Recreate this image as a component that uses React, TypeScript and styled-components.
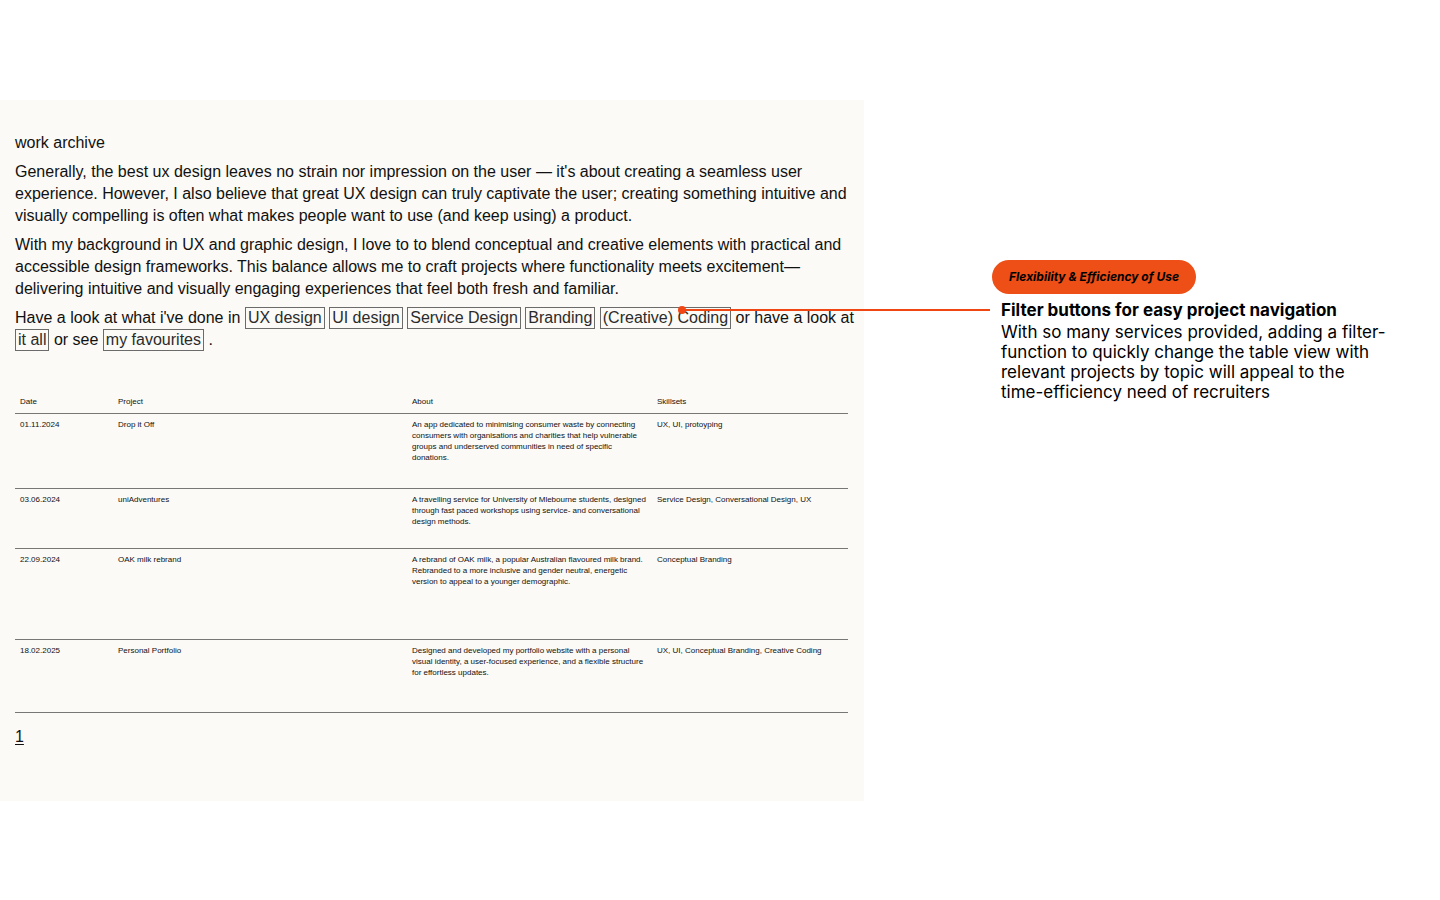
import React from "react";
import styled, { createGlobalStyle } from "styled-components";

const GlobalStyle = createGlobalStyle`
  *, *::before, *::after { box-sizing: border-box; }
  body { margin: 0; background: #ffffff; color: #111111; }
`;

const Page = styled.div`
  display: flex;
  align-items: flex-start;
  padding: 100px 0;
`;

const Archive = styled.main`
  flex: 0 0 60%;
  min-width: 0;
  padding: 32px 16px 53px 15px;
  background: #fbfaf6;
  font: 16px/22px "Liberation Sans", Arial, sans-serif;
`;

const Intro = styled.section`
  display: flex;
  flex-direction: column;
  gap: 7px;
  white-space: nowrap;
`;

const Title = styled.h1`
  margin: 0;
  font: inherit;
`;

const Paragraph = styled.p`
  margin: 0;
`;

const FilterButton = styled.button`
  height: 22px;
  padding: 0 2px;
  border: 1px solid #6b6b69;
  background: transparent;
  color: #2b2b2b;
  font: inherit;
  line-height: 20px;
  vertical-align: top;
  cursor: pointer;
`;

const ProjectTable = styled.table`
  width: 100%;
  margin-top: 40px;
  table-layout: fixed;
  border-collapse: collapse;
  font-size: 8px;
  line-height: 11px;
`;

const Row = styled.tr<{ $height: number }>`
  height: ${(p) => p.$height}px;
  border-bottom: 1px solid #777775;
`;

const HeadCell = styled.th<{ $share: number }>`
  width: ${(p) => (p.$share * 100) / 17}%;
  padding: 5px;
  font-weight: 400;
  text-align: left;
  vertical-align: top;
`;

const Cell = styled.td`
  padding: 5px;
  vertical-align: top;
  white-space: pre;
`;

const Pagination = styled.nav`
  margin-top: 13px;
`;

const PageLink = styled.a`
  color: inherit;
  text-underline-offset: 2px;
`;

const Annotation = styled.aside`
  flex: 1;
  min-width: 0;
  margin: 160px 16px 0 128px;
  font: 17px/20px Inter, sans-serif;
  color: #000000;
`;

const Tag = styled.span`
  display: inline-flex;
  align-items: center;
  height: 34px;
  padding: 0 17px;
  border-radius: 17px;
  background: #ed4f16;
  font-size: 12px;
  font-weight: 700;
  font-style: italic;
  vertical-align: top;
`;

const Note = styled.div`
  position: relative;
  padding: 6px 0 0 9px;
`;

const NoteTitle = styled.h2`
  margin: 0 0 2px;
  font: inherit;
  font-weight: 700;
`;

const Connector = styled.svg`
  position: absolute;
  top: 12px;
  right: calc(100% + 2px);
  width: 312px;
  height: 8px;
`;

const filters = ["UX design", "UI design", "Service Design", "Branding", "(Creative) Coding"];

const columns = [
  { label: "Date", share: 2 },
  { label: "Project", share: 6 },
  { label: "About", share: 5 },
  { label: "Skillsets", share: 4 },
];

const projects = [
  {
    date: "01.11.2024",
    name: "Drop it Off",
    about:
      "An app dedicated to minimising consumer waste by connecting\nconsumers with organisations and charities that help vulnerable\ngroups and underserved communities in need of specific\ndonations.",
    skills: "UX, UI, protoyping",
    height: 75,
  },
  {
    date: "03.06.2024",
    name: "uniAdventures",
    about:
      "A travelling service for University of Mlebourne students, designed\nthrough fast paced workshops using service- and conversational\ndesign methods.",
    skills: "Service Design, Conversational Design, UX",
    height: 60,
  },
  {
    date: "22.09.2024",
    name: "OAK milk rebrand",
    about:
      "A rebrand of OAK milk, a popular Australian flavoured milk brand.\nRebranded to a more inclusive and gender neutral, energetic\nversion to appeal to a younger demographic.",
    skills: "Conceptual Branding",
    height: 91,
  },
  {
    date: "18.02.2025",
    name: "Personal Portfolio",
    about:
      "Designed and developed my portfolio website with a personal\nvisual identity, a user-focused experience, and a flexible structure\nfor effortless updates.",
    skills: "UX, UI, Conceptual Branding, Creative Coding",
    height: 73,
  },
];

export default function App() {
  return (
    <>
      <GlobalStyle />
      <Page>
        <Archive>
          <Intro>
            <Title>work archive</Title>
            <Paragraph>
              Generally, the best ux design leaves no strain nor impression on the user — it's about creating a seamless user
              <br />
              experience. However, I also believe that great UX design can truly captivate the user; creating something intuitive and
              <br />
              visually compelling is often what makes people want to use (and keep using) a product.
            </Paragraph>
            <Paragraph>
              With my background in UX and graphic design, I love to to blend conceptual and creative elements with practical and
              <br />
              accessible design frameworks. This balance allows me to craft projects where functionality meets excitement—
              <br />
              delivering intuitive and visually engaging experiences that feel both fresh and familiar.
            </Paragraph>
            <Paragraph>
              Have a look at what i've done in{" "}
              {filters.map((name) => (
                <React.Fragment key={name}>
                  <FilterButton type="button">{name}</FilterButton>{" "}
                </React.Fragment>
              ))}
              or have a look at
              <br />
              <FilterButton type="button">it all</FilterButton> or see{" "}
              <FilterButton type="button">my favourites</FilterButton> .
            </Paragraph>
          </Intro>
          <ProjectTable>
            <thead>
              <Row $height={22}>
                {columns.map((c) => (
                  <HeadCell key={c.label} scope="col" $share={c.share}>
                    {c.label}
                  </HeadCell>
                ))}
              </Row>
            </thead>
            <tbody>
              {projects.map((p) => (
                <Row key={p.name} $height={p.height}>
                  <Cell>{p.date}</Cell>
                  <Cell>{p.name}</Cell>
                  <Cell>{p.about}</Cell>
                  <Cell>{p.skills}</Cell>
                </Row>
              ))}
            </tbody>
          </ProjectTable>
          <Pagination aria-label="Pages">
            <PageLink href="#page-1">1</PageLink>
          </Pagination>
        </Archive>
        <Annotation>
          <Tag>Flexibility &amp; Efficiency of Use</Tag>
          <Note>
            <Connector viewBox="0 0 312 8" aria-hidden="true">
              <path d="M4 4H312" stroke="#f04614" strokeWidth="2" />
              <circle cx="4" cy="4" r="4" fill="#f04614" />
            </Connector>
            <NoteTitle>Filter buttons for easy project navigation</NoteTitle>
            <Paragraph>
              With so many services provided, adding a filter-
              <br />
              function to quickly change the table view with
              <br />
              relevant projects by topic will appeal to the
              <br />
              time-efficiency need of recruiters
            </Paragraph>
          </Note>
        </Annotation>
      </Page>
    </>
  );
}
